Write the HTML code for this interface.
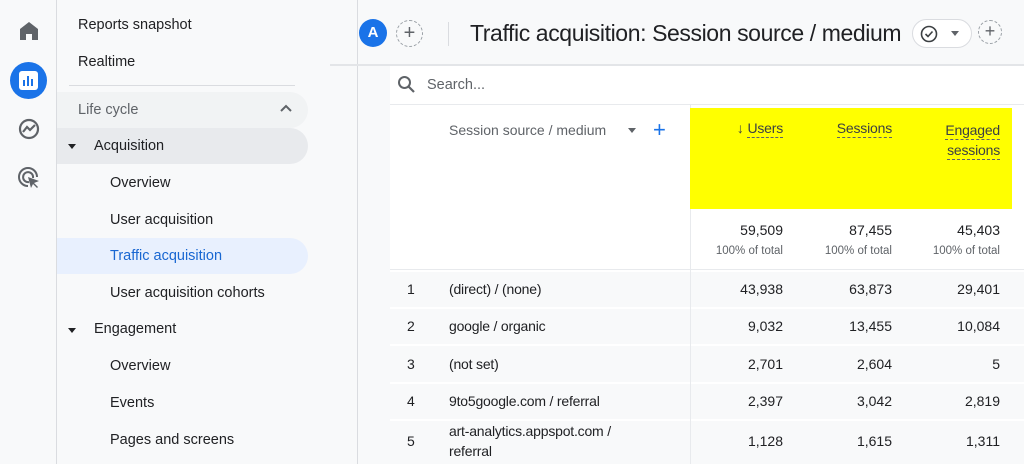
<!DOCTYPE html>
<html><head><meta charset="utf-8"><style>
*{margin:0;padding:0;box-sizing:border-box}
body{width:1024px;height:464px;overflow:hidden;background:#f8f9fa;font-family:"Liberation Sans",Arial,sans-serif;color:#202124;position:relative}
.abs{position:absolute}
.rail{left:0;top:0;width:57px;height:464px;border-right:1px solid #dadce0;background:#f8f9fa}
.nav{left:57px;top:0;width:301px;height:464px;border-right:1px solid #dadce0}
.ni{position:absolute;font-size:14.5px;color:#202124;white-space:nowrap}
.card{left:390px;top:66px;width:634px;height:398px;background:#fff}
.num{font-size:14px;color:#202124;text-align:right;position:absolute}
.row{position:absolute;left:390px;width:634px;background:#f8f9fa;border-top:2px solid #fff}
.rt{position:absolute;font-size:14px;color:#202124;letter-spacing:-.2px}
.sub{font-size:11.5px;color:#5f6368;position:absolute;text-align:right}
.hd{position:absolute;font-size:14px;color:#3c4043;text-align:right;letter-spacing:-.2px}
.hd span{border-bottom:1px dashed #5f6368;padding-bottom:1px}
</style></head><body>
<div class="abs rail"></div>
<svg class="abs" style="left:18px;top:21px" width="22" height="20" viewBox="0 0 22 20"><path d="M11 1 L20 8 V19 H14 V13 H8 V19 H2 V8 Z" fill="#5f6368"/></svg>
<div class="abs" style="left:10px;top:62px;width:37px;height:37px;border-radius:50%;background:#1a73e8"></div>
<div class="abs" style="left:19px;top:71px;width:19px;height:19px;border-radius:3px;background:#fff"></div>
<div class="abs" style="left:23px;top:80px;width:2px;height:6px;background:#1a73e8"></div>
<div class="abs" style="left:27px;top:76px;width:2px;height:10px;background:#1a73e8"></div>
<div class="abs" style="left:31px;top:79px;width:2px;height:7px;background:#1a73e8"></div>
<svg class="abs" style="left:17px;top:117px" width="24" height="24" viewBox="0 0 24 24"><circle cx="12" cy="12" r="9" fill="none" stroke="#5f6368" stroke-width="2.2"/><path d="M6 15 L10 10 L13 13 L18 8" fill="none" stroke="#5f6368" stroke-width="2.2"/></svg>
<svg class="abs" style="left:17px;top:166px" width="24" height="24" viewBox="0 0 24 24"><path d="M20 11 A9 9 0 1 0 11 20" fill="none" stroke="#5f6368" stroke-width="2"/><path d="M16 12 A5 5 0 1 0 12 16" fill="none" stroke="#5f6368" stroke-width="2"/><path d="M11 11 L22 15 L17 17 L21 21 L20 22 L16 18 L14 22 Z" fill="#5f6368"/></svg>

<div class="abs nav"></div>
<div class="ni" style="left:78px;top:17px">Reports snapshot</div>
<div class="ni" style="left:78px;top:54px">Realtime</div>
<div class="abs" style="left:69px;top:85px;width:226px;height:1px;background:#dadce0"></div>
<div class="abs" style="left:57px;top:92px;width:251px;height:36px;border-radius:0 18px 18px 0;background:#f1f3f4"></div>
<div class="ni" style="left:78px;top:102px;color:#5f6368">Life cycle</div>
<svg class="abs" style="left:280px;top:104px" width="12" height="8" viewBox="0 0 12 8"><path d="M1 7 L6 2 L11 7" fill="none" stroke="#5f6368" stroke-width="2"/></svg>
<div class="abs" style="left:57px;top:128px;width:251px;height:36px;border-radius:0 18px 18px 0;background:#e8eaed"></div>
<svg class="abs" style="left:68px;top:144px" width="8" height="5"><path d="M0 0 H8 L4 5Z" fill="#202124"/></svg>
<div class="ni" style="left:94px;top:138px">Acquisition</div>
<div class="ni" style="left:110px;top:175px">Overview</div>
<div class="ni" style="left:110px;top:212px">User acquisition</div>
<div class="abs" style="left:57px;top:238px;width:251px;height:36px;border-radius:0 18px 18px 0;background:#e8f0fe"></div>
<div class="ni" style="left:110px;top:248px;color:#1967d2">Traffic acquisition</div>
<div class="ni" style="left:110px;top:285px">User acquisition cohorts</div>
<svg class="abs" style="left:68px;top:328px" width="8" height="5"><path d="M0 0 H8 L4 5Z" fill="#202124"/></svg>
<div class="ni" style="left:94px;top:321px">Engagement</div>
<div class="ni" style="left:110px;top:358px">Overview</div>
<div class="ni" style="left:110px;top:395px">Events</div>
<div class="ni" style="left:110px;top:432px">Pages and screens</div>

<div class="abs" style="left:359px;top:19px;width:28px;height:28px;border-radius:50%;background:#1a73e8;color:#fff;font-size:15px;font-weight:bold;text-align:center;line-height:28px">A</div>
<div class="abs" style="left:396px;top:20px;width:27px;height:27px;border-radius:50%;border:1px dashed #9aa0a6;color:#5f6368;font-size:20px;text-align:center;line-height:24px">+</div>
<div class="abs" style="left:448px;top:22px;width:1px;height:24px;background:#dadce0"></div>
<div class="abs" style="left:470px;top:20px;font-size:23px;color:#202124;white-space:nowrap;letter-spacing:-.4px">Traffic acquisition: Session source / medium</div>
<div class="abs" style="left:912px;top:19px;width:60px;height:29px;border-radius:15px;border:1px solid #dadce0;background:#fff"></div>
<svg class="abs" style="left:920px;top:25px" width="18" height="18" viewBox="0 0 18 18"><circle cx="9" cy="9" r="7.5" fill="none" stroke="#3c4043" stroke-width="1.6"/><path d="M5.5 9 L8 11.5 L12.5 6.5" fill="none" stroke="#3c4043" stroke-width="1.6"/></svg>
<svg class="abs" style="left:951px;top:31px" width="8" height="5"><path d="M0 0 H8 L4 5Z" fill="#5f6368"/></svg>
<div class="abs" style="left:978px;top:20px;width:24px;height:24px;border-radius:50%;border:1px dashed #9aa0a6;color:#5f6368;font-size:18px;text-align:center;line-height:21px">+</div>
<div class="abs" style="left:330px;top:64px;width:694px;height:2px;background:#e3e5e8"></div>

<div class="abs card"></div>
<svg class="abs" style="left:397px;top:75px" width="19" height="19" viewBox="0 0 19 19"><circle cx="7.5" cy="7.5" r="5.5" fill="none" stroke="#5f6368" stroke-width="2"/><path d="M11.5 11.5 L17 17" stroke="#5f6368" stroke-width="2.2"/></svg>
<div class="abs" style="left:427px;top:77px;font-size:14.5px;color:#5f6368">Search...</div>
<div class="abs" style="left:390px;top:104px;width:634px;height:1px;background:#e8eaed"></div>
<div class="abs" style="left:690px;top:104px;width:1px;height:360px;background:#e8eaed"></div>
<div class="abs" style="left:690px;top:108px;width:322px;height:101px;background:#ffff00"></div>
<div class="abs" style="left:449px;top:122px;font-size:14px;color:#5f6368">Session source / medium</div>
<svg class="abs" style="left:628px;top:128px" width="8" height="5"><path d="M0 0 H8 L4 5Z" fill="#5f6368"/></svg>
<div class="abs" style="left:653px;top:117px;font-size:22px;color:#1a73e8">+</div>
<div class="hd" style="right:241px;top:120px"><span style="border:none">↓</span> <span>Users</span></div>
<div class="hd" style="right:132px;top:120px"><span>Sessions</span></div>
<div class="hd" style="right:24px;top:120px;line-height:20px"><span>Engaged</span><br><span>sessions</span></div>
<div class="num" style="right:241px;top:222px">59,509</div>
<div class="num" style="right:132px;top:222px">87,455</div>
<div class="num" style="right:24px;top:222px">45,403</div>
<div class="sub" style="right:241px;top:245px">100% of total</div>
<div class="sub" style="right:132px;top:245px">100% of total</div>
<div class="sub" style="right:24px;top:245px">100% of total</div>
<div class="abs" style="left:390px;top:269px;width:634px;height:1px;background:#e8eaed"></div>

<div class="row" style="top:270px;height:37px"></div>
<div class="row" style="top:307px;height:37px"></div>
<div class="row" style="top:344px;height:38px"></div>
<div class="row" style="top:382px;height:37px"></div>
<div class="row" style="top:419px;height:45px"></div>
<div class="abs" style="left:690px;top:270px;width:1px;height:194px;background:#e8eaed"></div>

<div class="rt" style="left:407px;top:281px">1</div><div class="rt" style="left:449px;top:281px">(direct) / (none)</div>
<div class="num" style="right:241px;top:281px">43,938</div><div class="num" style="right:132px;top:281px">63,873</div><div class="num" style="right:24px;top:281px">29,401</div>
<div class="rt" style="left:407px;top:318px">2</div><div class="rt" style="left:449px;top:318px">google / organic</div>
<div class="num" style="right:241px;top:318px">9,032</div><div class="num" style="right:132px;top:318px">13,455</div><div class="num" style="right:24px;top:318px">10,084</div>
<div class="rt" style="left:407px;top:356px">3</div><div class="rt" style="left:449px;top:356px">(not set)</div>
<div class="num" style="right:241px;top:356px">2,701</div><div class="num" style="right:132px;top:356px">2,604</div><div class="num" style="right:24px;top:356px">5</div>
<div class="rt" style="left:407px;top:393px">4</div><div class="rt" style="left:449px;top:393px">9to5google.com / referral</div>
<div class="num" style="right:241px;top:393px">2,397</div><div class="num" style="right:132px;top:393px">3,042</div><div class="num" style="right:24px;top:393px">2,819</div>
<div class="rt" style="left:407px;top:433px">5</div><div class="rt" style="left:449px;top:421px;line-height:20px">art-analytics.appspot.com /<br>referral</div>
<div class="num" style="right:241px;top:433px">1,128</div><div class="num" style="right:132px;top:433px">1,615</div><div class="num" style="right:24px;top:433px">1,311</div>
</body></html>
